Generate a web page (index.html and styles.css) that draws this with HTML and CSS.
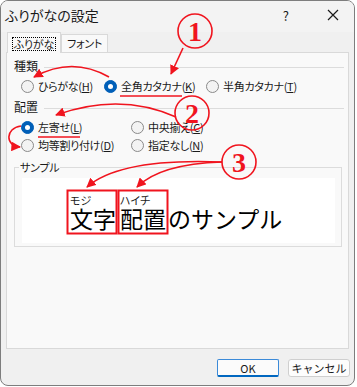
FILE: index.html
```html
<!DOCTYPE html>
<html lang="ja">
<head>
<meta charset="utf-8">
<link rel="stylesheet" href="styles.css">
</head>
<body>
<div class="window">
  <div class="titlebar">
    <span class="title">ふりがなの設定</span>
    <span class="help">?</span>
    <svg class="close" width="12" height="12" viewBox="0 0 12 12"><path d="M1 1L11 11M11 1L1 11" stroke="#1a1a1a" stroke-width="1.2" fill="none"/></svg>
  </div>
  <div class="tabs">
    <div class="tab active"><span class="focus">ふりがな</span></div>
    <div class="tab">フォント</div>
  </div>
  <div class="panel">
    <div class="section-head"><span>種類</span><div class="rule"></div></div>
    <div class="row first">
      <label class="opt w83"><span class="radio"></span><span class="txt">ひらがな(<u>H</u>)</span></label>
      <label class="opt w102"><span class="radio on"></span><span class="txt">全角カタカナ(<u>K</u>)</span></label>
      <label class="opt"><span class="radio"></span><span class="txt">半角カタカナ(<u>T</u>)</span></label>
    </div>
    <div class="section-head second"><span>配置</span><div class="rule"></div></div>
    <div class="row first">
      <label class="opt w110"><span class="radio on"></span><span class="txt">左寄せ(<u>L</u>)</span></label>
      <label class="opt"><span class="radio"></span><span class="txt">中央揃え(<u>C</u>)</span></label>
    </div>
    <div class="row">
      <label class="opt w110"><span class="radio"></span><span class="txt">均等割り付け(<u>D</u>)</span></label>
      <label class="opt"><span class="radio"></span><span class="txt">指定なし(<u>N</u>)</span></label>
    </div>
    <fieldset class="sample">
      <legend>サンプル</legend>
      <div class="preview">
        <div class="word w1"><span class="ruby">モジ</span><span class="base">文字</span></div>
        <div class="word w2"><span class="ruby">ハイチ</span><span class="base">配置</span></div>
        <div class="word"><span class="ruby"></span><span class="base">のサンプル</span></div>
      </div>
    </fieldset>
  </div>
  <div class="buttons">
    <button class="btn ok">OK</button>
    <button class="btn">キャンセル</button>
  </div>
</div>
<svg class="annot" width="357" height="387" viewBox="0 0 357 387">
  <defs>
    <marker id="ah" viewBox="0 0 10 10" refX="9" refY="5" markerWidth="6" markerHeight="6" orient="auto-start-reverse">
      <path d="M0 0L10 5L0 10z" fill="#f0141e"/>
    </marker>
  </defs>
  <g fill="none" stroke="#f0141e" stroke-width="1.6">
    <circle cx="195" cy="31" r="17"/>
    <path d="M183 48L171 74" marker-end="url(#ah)"/>
    <path d="M109 77Q72 56 34 77" marker-end="url(#ah)"/>
    <path d="M120 96H182"/>
    <circle cx="192" cy="113" r="17"/>
    <path d="M176 117Q120 92 56 115" marker-end="url(#ah)"/>
    <path d="M38 137H80"/>
    <path d="M21 126C5 128 5 146 20 147" marker-end="url(#ah)"/>
    <circle cx="239" cy="162" r="17"/>
    <path d="M222 162Q120 158 87 187" marker-end="url(#ah)"/>
    <path d="M222 162Q160 164 137 187" marker-end="url(#ah)"/>
    <rect x="67.5" y="190.5" width="49" height="43" stroke-width="2"/>
    <rect x="118.5" y="190.5" width="49" height="43" stroke-width="2"/>
  </g>
  <g class="num" fill="#f0141e">
    <text x="195" y="41">1</text>
    <text x="192" y="123">2</text>
    <text x="239" y="172">3</text>
  </g>
</svg>
</body>
</html>
```
FILE: styles.css
```css
* { box-sizing: border-box; }
html, body { margin: 0; padding: 0; background: #ffffff; }
body {
  position: relative;
  width: 357px;
  height: 387px;
  font-family: "Noto Sans CJK JP", "Noto Sans", sans-serif;
  font-size: 12px;
  color: #1a1a1a;
  font-feature-settings: "palt";
}
.window {
  width: 355px;
  height: 386px;
  border: 1px solid #7d7d7d;
  border-radius: 8px;
  background: #f0f0f0;
  display: flex;
  flex-direction: column;
  overflow: hidden;
}
.titlebar {
  height: 31px;
  display: flex;
  align-items: center;
  padding-left: 4px;
  background: #f3f3f3;
}
.title { font-size: 14px; line-height: 18px; margin-top: -3px; }
.help { margin-left: auto; font-size: 13px; margin-right: 38px; margin-top: -3px; }
.close { margin-right: 15px; margin-top: -4px; }
.tabs {
  height: 20px;
  display: flex;
  align-items: flex-end;
  padding-left: 6px;
  position: relative;
  z-index: 1;
}
.tab {
  height: 18px;
  padding: 0 5px;
  border: 1px solid #d9d9d9;
  border-bottom: none;
  background: #f9f9f9;
  line-height: 16px;
  font-size: 11px;
  letter-spacing: -0.2px;
  white-space: nowrap;
}
.tab.active {
  height: 21px;
  margin-bottom: -1px;
  padding: 3px 0 0;
  width: 54px;
  text-align: center;
}
.focus {
  display: inline-block;
  border: 1px dotted #000;
  line-height: 12px;
  padding: 0 1px;
}
.panel {
  margin: 0 5px;
  height: 297px;
  border: 1px solid #d9d9d9;
  background: #f9f9f9;
  padding: 6px 4px 0 7px;
}
.section-head {
  height: 14px;
  display: flex;
  align-items: center;
  line-height: 14px;
}
.section-head.second { margin-top: 5px; }
.rule { flex: 1; height: 1px; background: #dcdcdc; margin-left: 6px; margin-top: 2px; }
.row {
  height: 18px;
  display: flex;
  align-items: center;
  padding-left: 7px;
}
.row.first { margin-top: 4px; }
.opt { display: flex; align-items: center; flex: none; }
.w83 { width: 83px; }
.w102 { width: 102px; }
.w110 { width: 110px; }
.radio {
  width: 13px;
  height: 13px;
  border-radius: 50%;
  border: 1px solid #8a8a8a;
  background: #f3f3f3;
  flex: none;
  position: relative;
}
.radio.on {
  border-color: #005fb8;
  background: #005fb8;
}
.radio.on::after {
  content: "";
  position: absolute;
  left: 3px; top: 3px;
  width: 5px; height: 5px;
  border-radius: 50%;
  background: #fff;
}
.txt {
  margin-left: 4px;
  line-height: 16px;
  white-space: nowrap;
  font-size: 11px;
  letter-spacing: -0.3px;
}
.txt u { text-underline-offset: 1px; }
.sample {
  margin: 7px 2px 0 0;
  padding: 5px 6px 3px 7px;
  border: 1px solid #dcdcdc;
  min-width: 0;
}
.sample legend {
  padding: 0 1px;
  margin-left: -3px;
  line-height: 12px;
  font-size: 11px;
  letter-spacing: -0.2px;
}
.preview {
  height: 65px;
  background: #ffffff;
  display: flex;
  padding: 16px 0 0 48px;
  font-feature-settings: normal;
}
.word { display: flex; flex-direction: column; }
.w1 { margin-right: 4px; }
.w2 { margin-right: 2px; }
.ruby { font-size: 11px; line-height: 12px; height: 12px; font-feature-settings: "palt"; }
.base { font-size: 23px; line-height: 23px; margin-top: 1px; color: #000; }
.buttons {
  display: flex;
  justify-content: flex-end;
  gap: 9px;
  padding: 10px 4px 0 0;
}
.btn {
  width: 62px;
  height: 18px;
  padding: 0;
  font-family: inherit;
  font-size: 11px;
  line-height: 14px;
  background: #fdfdfd;
  border: 1px solid #cfcfcf;
  border-radius: 3px;
  color: #1a1a1a;
  flex: none;
}
.btn.ok {
  border: 1px solid #3b8ad8;
  border-bottom: 2px solid #0067c0;
  border-radius: 2px;
  background: #fbfbfb;
}
.annot {
  position: absolute;
  left: 0;
  top: 0;
  pointer-events: none;
}
.num text {
  font-family: "Liberation Serif", "DejaVu Serif", serif;
  font-weight: bold;
  font-size: 28px;
  text-anchor: middle;
}
```
